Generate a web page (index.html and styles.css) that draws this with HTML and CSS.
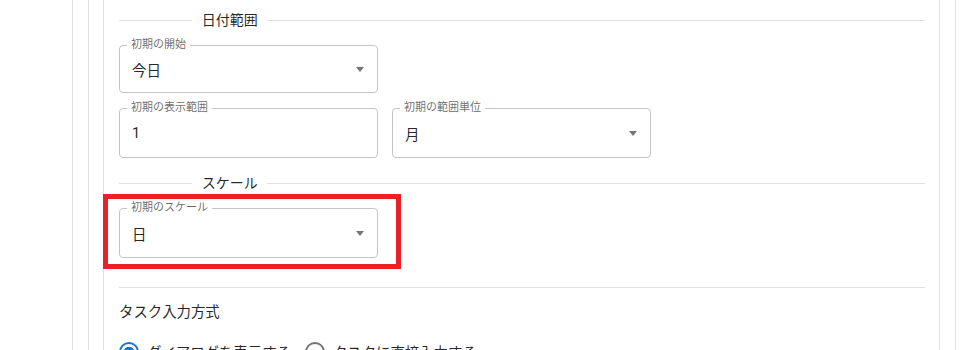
FILE: index.html
```html
<!DOCTYPE html>
<html lang="ja">
<head>
    <meta charset="UTF-8" />
    <meta name="viewport" content="width=device-width, initial-scale=1" />
    <title>表示設定</title>
    <link rel="stylesheet" href="styles.css">
</head>
<body>
    <div class="frame">
        <div class="panel">
            <div class="section">
                <div class="divider"><span>日付範囲</span></div>

                <div class="field field-first">
                    <span class="field-label">初期の開始</span>
                    <span class="field-value">今日</span>
                    <span class="arrow"></span>
                </div>

                <div class="row">
                    <div class="field field-tall">
                        <span class="field-label">初期の表示範囲</span>
                        <span class="field-value">1</span>
                    </div>
                    <div class="field field-tall">
                        <span class="field-label">初期の範囲単位</span>
                        <span class="field-value">月</span>
                        <span class="arrow"></span>
                    </div>
                </div>

                <div class="divider divider-scale"><span>スケール</span></div>

                <div class="highlight">
                    <div class="field field-tall">
                        <span class="field-label">初期のスケール</span>
                        <span class="field-value">日</span>
                        <span class="arrow"></span>
                    </div>
                </div>

                <hr class="rule">

                <div class="group-title">タスク入力方式</div>
                <div class="radios">
                    <label class="radio">
                        <span class="radio-icon checked"></span>
                        <span>ダイアログを表示する</span>
                    </label>
                    <label class="radio">
                        <span class="radio-icon"></span>
                        <span>タスクに直接入力する</span>
                    </label>
                </div>
            </div>
        </div>
    </div>
</body>
</html>
```
FILE: styles.css
```css
body {
    margin: 0;
    background: #fff;
    font-family: Roboto, "Noto Sans CJK JP", sans-serif;
    color: rgba(0, 0, 0, 0.87);
    height: 350px;
    overflow: hidden;
}
.frame {
    margin-left: 72px;
    width: 852px;
    padding: 0 15px;
    border-left: 1px solid #e0e0e0;
    border-right: 1px solid #e0e0e0;
    height: 350px;
}
.panel {
    border-left: 1px solid #e0e0e0;
    border-right: 1px solid #e0e0e0;
    padding-left: 14px;
    height: 350px;
}
.section {
    border-left: 1px solid #e0e0e0;
    padding: 0 14px 0 15px;
    height: 350px;
}
.divider {
    display: flex;
    align-items: center;
    height: 24px;
    padding-top: 8px;
    font-size: 14px;
    line-height: 24px;
}
.divider::before,
.divider::after {
    content: "";
    border-top: 1px solid #e0e0e0;
}
.divider::before {
    width: 10%;
}
.divider::after {
    width: 90%;
}
.divider span {
    padding: 0 9.6px;
    white-space: nowrap;
}
.divider-scale {
    padding-top: 14px;
    height: 22px;
}
.field {
    position: relative;
    box-sizing: border-box;
    width: 259px;
    height: 48px;
    border: 1px solid #c4c4c4;
    border-radius: 4px;
    display: flex;
    align-items: center;
    padding: 0 13px 0 12px;
}
.field-first {
    margin-top: 13px;
}
.field-tall {
    height: 50px;
}
.field-label {
    position: absolute;
    top: -9px;
    left: 7px;
    padding: 0 4px;
    background: #fff;
    font-size: 11px;
    line-height: 16px;
    color: rgba(0, 0, 0, 0.6);
}
.field-value {
    flex: 1;
    font-size: 14.5px;
}
.arrow {
    width: 0;
    height: 0;
    border-left: 4px solid transparent;
    border-right: 4px solid transparent;
    border-top: 5px solid #757575;
}
.row {
    display: flex;
    gap: 14px;
    margin-top: 15px;
}
.highlight {
    box-sizing: border-box;
    width: 298px;
    margin-left: -16px;
    border: 5px solid #e8202a;
    padding: 9px 0 6px 11px;
}
.rule {
    border: none;
    border-top: 1px solid #e0e0e0;
    margin: 18px 0 0;
}
.group-title {
    margin-top: 13px;
    font-size: 14.4px;
    line-height: 24px;
}
.radios {
    display: flex;
    gap: 14px;
    margin-top: 16px;
    font-size: 14.4px;
}
.radio {
    display: flex;
    align-items: center;
    gap: 8px;
}
.radio-icon {
    box-sizing: border-box;
    width: 20px;
    height: 20px;
    border: 2px solid #757575;
    border-radius: 50%;
}
.radio-icon.checked {
    border-color: #1976d2;
    background: radial-gradient(circle, #1976d2 0 5px, transparent 5.5px);
}
```
